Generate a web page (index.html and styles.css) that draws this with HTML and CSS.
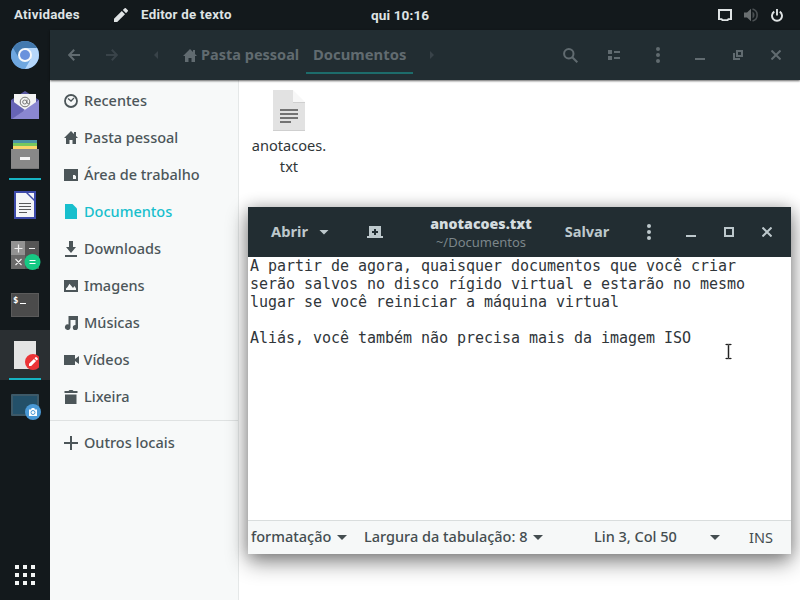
FILE: index.html
```html
<!DOCTYPE html>
<html lang="pt-BR">
<head>
<meta charset="utf-8">
<title>Editor de texto</title>
<link rel="stylesheet" href="styles.css">
</head>
<body>
<div class="desktop">
  <header class="topbar">
    <span class="activities">Atividades</span>
    <svg class="pencil" width="14" height="14" viewBox="0 0 14 14"><path fill="#dfe3e4" d="M0 14v-3.200L7.800 3l3.200 3.200L3.200 14zM8.800 2l1.600-1.600a1.200 1.200 0 0 1 1.700 0l1.500 1.500a1.200 1.200 0 0 1 0 1.700L12 5.200z"/></svg>
    <span class="appname">Editor de texto</span>
    <span class="clock">qui 10:16</span>
    <span class="tray">
      <svg width="14" height="12" viewBox="0 0 14 12"><path fill="#dfe3e4" fill-rule="evenodd" d="M0 0h14v11h-3l-1 1H4l-1-1H0zM2 2v7.200h2l1 1h4l1-1h2V2z"/></svg>
      <svg width="15" height="14" viewBox="0 0 15 14"><path fill="#6a6f71" d="M0 4.500h3L7 .8v12.400L3 9.500H0z"/><path fill="#4b5053" d="M8.500 3.500a4 4 0 0 1 0 7z"/><path d="M8.500 1a6.200 6.200 0 0 1 0 12" fill="none" stroke="#4b5053" stroke-width="1.600"/></svg>
      <svg width="12" height="13" viewBox="0 0 12 13"><path d="M3.300 2.600a5 5 0 1 0 5.400 0M6 0v6.500" fill="none" stroke="#dfe3e4" stroke-width="1.900"/></svg>
    </span>
  </header>

  <div class="workspace">
    <nav class="dock">
      <div class="app"><svg width="28" height="28" viewBox="0 0 28 28"><circle cx="14" cy="14" r="14" fill="#65a1dc"/><path fill="#4379ae" d="M1.900 7A14 14 0 0 1 26.100 7L14 7.500 8 17z"/><path fill="#6fa7df" d="M1.900 7a14 14 0 0 0 12.100 21l6-10.500-12 .5z"/><path fill="#b5d7fb" d="M14 7h12.100A14 14 0 0 1 14 28l6-10.500z"/><circle cx="14" cy="14" r="7" fill="#f5f8fb"/><circle cx="14" cy="14" r="5" fill="#6a92dd"/></svg></div>
      <div class="app mail"><svg width="28" height="28" viewBox="0 0 28 28"><path fill="#5957a0" d="M0 9 14 0l14 9v10H0z"/><path fill="#f3f3f3" d="M3 3h22v17H3z"/><circle cx="14" cy="11" r="4.800" fill="none" stroke="#777" stroke-width="1"/><circle cx="13.700" cy="11" r="2" fill="none" stroke="#777"/><path d="M16 8.500v3.500q1.500 1.500 2.500-.5" fill="none" stroke="#777"/><path fill="#6664b5" d="M0 9l14 10L0 29z"/><path fill="#8a87d1" d="M0 28.500 28 9v19.500z"/></svg></div>
      <div class="app running archive"><svg width="28" height="29" viewBox="0 0 28 29"><path fill="#4b92a3" d="M2 0h24v4H2z"/><path fill="#78c95d" d="M2 3h24v4H2z"/><path fill="#fbd76a" d="M2 6h24v4H2z"/><path fill="#888" d="M0 9h28v20H0z"/><path fill="#777" d="M0 28h28v1H0z"/><path fill="#f4f4f4" d="M9 17h10v3H9z"/></svg></div>
      <div class="app"><svg width="22" height="28" viewBox="0 0 22 28"><path fill="#3d4aaa" d="M0 0h22v28H0z"/><path fill="#f4f5f8" d="M2 2h10l8 8v16H2z"/><path fill="#f4f5f8" d="M14 2h6v6z"/><path d="M5 12.500h12M5 15.500h12M5 18.500h12M5 21.500h8" stroke="#58595c"/></svg></div>
      <div class="app calc"><svg width="30" height="29" viewBox="0 0 30 29"><path fill="#929292" d="M0 0h14v14H0z"/><path fill="#555" d="M14 0h14v14H14z"/><path fill="#696969" d="M0 14h14v14H0z"/><path fill="#555" d="M14 14h14v14H14z"/><path d="M3.500 7.500h8M7.500 3.500v8M18 7.500h6M4.500 18l6 6m0-6-6 6" stroke="#eee" stroke-width="1.200"/><circle cx="21.500" cy="21" r="8" fill="#16c984"/><path d="M18.500 19.500h6m-6 3h6" stroke="#fff" stroke-width="1.200"/></svg></div>
      <div class="app"><div class="terminal">$<i></i></div></div>
      <div class="app running current"><svg width="28" height="29" viewBox="0 0 28 29"><path fill="#e4e4e4" d="M3 0h22v28H3z"/><circle cx="22" cy="21" r="8" fill="#eb3336"/><path fill="#fff" d="M18 25v-2.200l4.900-4.900 2.200 2.200-4.900 4.900zM23.500 17.300l1-1q.5-.5 1 0l1.200 1.200q.5.500 0 1l-1 1z"/></svg></div>
      <div class="app camera"><svg width="30" height="26" viewBox="0 0 30 26"><rect width="28" height="22" rx="1" fill="#3d5968"/><path fill="#235069" d="M2 2h24v18H2z"/><circle cx="22" cy="18" r="8" fill="#4a99d6"/><path fill="#fff" d="M18 15.500h2l.8-1.500h2.400l.8 1.500h2V22h-8z"/><circle cx="22" cy="18.500" r="2" fill="none" stroke="#4a99d6"/></svg></div>
      <svg class="launcher" width="20" height="20" viewBox="0 0 20 20" fill="#f2f4f4"><path d="M0 0h4v4H0zM8 0h4v4H8zM16 0h4v4h-4zM0 8h4v4H0zM8 8h4v4H8zM16 8h4v4h-4zM0 16h4v4H0zM8 16h4v4H8zM16 16h4v4h-4z"/></svg>
    </nav>

    <main class="files">
      <div class="filesbar">
        <svg width="12" height="12" viewBox="0 0 12 12"><path class="line" d="M6.200.8 1.200 6l5 5.200M1 6h11"/></svg>
        <svg class="faded" width="12" height="12" viewBox="0 0 12 12"><path class="line" d="m5.800.8 5 5.200-5 5.200M11 6H0"/></svg>
        <svg class="faded" width="4" height="8" viewBox="0 0 4 8"><path fill="currentColor" d="M4 0v8L0 4z"/></svg>
        <div class="crumb home"><svg width="14" height="13" viewBox="0 0 14 13"><path fill="currentColor" d="M7 0 0 7h2v6h3.500V9h3v4H12V7h2l-2-2V1h-2v2z"/></svg><span>Pasta pessoal</span></div>
        <div class="crumb selected"><span>Documentos</span></div>
        <svg class="faded" width="4" height="8" viewBox="0 0 4 8"><path fill="currentColor" d="M0 0v8l4-4z"/></svg>
        <i></i>
        <svg width="15" height="15" viewBox="0 0 15 15"><circle class="line" cx="5.800" cy="5.800" r="4.700"/><path class="line" d="m9.300 9.300 5 5"/></svg>
        <svg width="12" height="10" viewBox="0 0 12 10"><path fill="currentColor" d="M0 0h4v4H0zM6 1h6v2H6zM0 6h4v4H0zM6 7h6v2H6z"/></svg>
        <svg width="4" height="16" viewBox="0 0 4 16"><g fill="currentColor"><circle cx="2" cy="2" r="2"/><circle cx="2" cy="8" r="2"/><circle cx="2" cy="14" r="2"/></g></svg>
        <i></i>
        <svg width="10" height="10" viewBox="0 0 10 10"><path fill="currentColor" d="M0 8h10v2H0z"/></svg>
        <svg width="10" height="10" viewBox="0 0 10 10"><path fill="currentColor" fill-rule="evenodd" d="M3 0h7v7H3zM5 2v3h3V2zM0 3h2v5h5v2H0z"/></svg>
        <svg width="10" height="10" viewBox="0 0 10 10"><path class="line" d="m.5.500 9 9m0-9-9 9"/></svg>
      </div>
      <div class="filesbody">
        <aside class="places">
          <div class="place"><svg width="14" height="14" viewBox="0 0 14 14"><circle cx="7" cy="7" r="6" fill="none" stroke="currentColor" stroke-width="1.800"/><path d="m4 4.500 3 2.500 3-3" fill="none" stroke="currentColor" stroke-width="1.300"/></svg><span>Recentes</span></div>
          <div class="place"><svg width="14" height="13" viewBox="0 0 14 13"><path fill="currentColor" d="M7 0 0 7h2v6h3.500V9h3v4H12V7h2l-2-2V1h-2v2z"/></svg><span>Pasta pessoal</span></div>
          <div class="place"><svg width="14" height="12" viewBox="0 0 14 12"><path fill="currentColor" fill-rule="evenodd" d="M0 0h14v12H0zM9 6v4h3V7.200L10.800 6z"/></svg><span>Área de trabalho</span></div>
          <div class="place active"><svg width="14" height="15" viewBox="0 0 14 15"><path fill="currentColor" d="M1 0h7.500L13 4.500V15H1z"/></svg><span>Documentos</span></div>
          <div class="place"><svg width="14" height="16" viewBox="0 0 14 16"><path fill="currentColor" d="M5 0h4v6h3l-5 6-5-6h3zM1 14h12v2H1z"/></svg><span>Downloads</span></div>
          <div class="place"><svg width="14" height="12" viewBox="0 0 14 12"><path fill="currentColor" fill-rule="evenodd" d="M0 0h14v12H0zM2 10h10V8.500L10.500 6 9 8 5.500 3.800 3.500 7 2 8.500z"/></svg><span>Imagens</span></div>
          <div class="place"><svg width="14" height="14" viewBox="0 0 14 14"><path fill="currentColor" d="M4.500 0H14v11.500A2.600 2.600 0 1 1 11.500 9V4H6.500v7.500A2.800 2.800 0 1 1 4.500 8.500z"/></svg><span>Músicas</span></div>
          <div class="place video"><svg width="15" height="10" viewBox="0 0 15 10"><path fill="currentColor" d="M0 0h11v4l4-3v8l-4-3v4H0z"/></svg><span>Vídeos</span></div>
          <div class="place"><svg width="14" height="14" viewBox="0 0 14 14"><path fill="currentColor" d="M.5 1h4l1-1h3l1 1h4v2H.5zM1 4.500h11.500V14H1z"/></svg><span>Lixeira</span></div>
          <div class="place other"><svg width="14" height="14" viewBox="0 0 14 14"><path fill="currentColor" d="M6 0h2v6h6v2H8v6H6V8H0V6h6z"/></svg><span>Outros locais</span></div>
        </aside>
        <section class="listing">
          <div class="file">
            <svg width="32" height="41" viewBox="0 0 32 41"><path fill="#e2e2e2" d="M0 0h20v12h12v29H0z"/><path fill="#f7f7f7" d="m20 0 12 12H20z"/><path fill="#cfcfcf" d="M0 40h32v1H0zM20 12h12v1H20z"/><path fill="#737373" d="M7 19h18v2H7zM7 23h18v2H7zM7 27h18v2H7zM7 31h11v2H7z"/></svg>
            <span>anotacoes.<br>txt</span>
          </div>
        </section>
      </div>
    </main>
  </div>

  <section class="editor">
    <div class="editorbar">
      <div class="open"><span>Abrir</span><b class="caret"></b></div>
      <svg width="16" height="12" viewBox="0 0 16 12"><path fill="currentColor" fill-rule="evenodd" d="M2 0h12v10h2v2H0v-2h2zM7 3v2H5v2h2v2h2V7h2V5H9V3z"/></svg>
      <div class="title"><strong>anotacoes.txt</strong><small>~/Documentos</small></div>
      <span class="save">Salvar</span>
      <i></i>
      <svg width="4" height="16" viewBox="0 0 4 16"><g fill="currentColor"><circle cx="2" cy="2" r="2"/><circle cx="2" cy="8" r="2"/><circle cx="2" cy="14" r="2"/></g></svg>
      <i></i>
      <svg width="10" height="10" viewBox="0 0 10 10"><path fill="currentColor" d="M0 8h10v2H0z"/></svg>
      <svg width="10" height="10" viewBox="0 0 10 10"><path fill="currentColor" fill-rule="evenodd" d="M0 0h10v10H0zM2 2v6h6V2z"/></svg>
      <svg width="10" height="10" viewBox="0 0 10 10"><path class="line" d="m.5.500 9 9m0-9-9 9"/></svg>
    </div>
    <pre class="text">A partir de agora, quaisquer documentos que você criar
serão salvos no disco rígido virtual e estarão no mesmo
lugar se você reiniciar a máquina virtual

Aliás, você também não precisa mais da imagem ISO</pre>
    <footer class="status">
      <span class="format">formatação</span><b class="caret"></b>
      <span class="tabs">Largura da tabulação: 8</span><b class="caret"></b>
      <span class="position">Lin 3, Col 50</span><b class="caret"></b>
      <span class="mode">INS</span>
    </footer>
  </section>
  <svg class="pointer" width="9" height="18" viewBox="0 0 9 18"><path d="M2 1.500h5M2 15.500h5M4.500 1.500v14" stroke="#ddd" stroke-width="3"/><path d="M1.500 1.500h2l1 .5 1-.5h2M1.500 15.500h2l1-.5 1 .5h2M4.500 2v13" fill="none" stroke="#222" stroke-width="1.200"/></svg>
</div>
</body>
</html>
```
FILE: styles.css
```css
* { box-sizing: border-box; }
body { margin: 0; }
svg { display: block; flex: none; }
span, strong, small { white-space: nowrap; }

.desktop {
  position: relative;
  display: flex;
  flex-direction: column;
  width: 800px;
  height: 600px;
  overflow: hidden;
  background: #13191c;
  font: 500 15px/20px "Noto Sans", sans-serif;
}

.topbar {
  display: grid;
  grid-template-columns: 100px 27px 230px 86px 1fr;
  align-items: center;
  height: 30px;
  padding-left: 14px;
  color: #dfe3e4;
  font: 700 13.300px/30px Roboto, sans-serif;
  letter-spacing: .27px;
}
.clock { font-size: 13.600px; letter-spacing: .1px; }
.tray { display: flex; align-items: center; justify-content: flex-end; gap: 12px; padding-right: 17px; }

.workspace { display: flex; height: 570px; }
.dock { display: flex; flex-direction: column; width: 50px; }
.app { display: flex; align-items: center; justify-content: center; height: 50px; }
.running { background: linear-gradient(#16b3c2, #16b3c2) 9px 48px / 32px 2px no-repeat; }
.current { background-color: #2a2f32; }
.mail, .archive { padding-bottom: 1px; }
.calc, .camera { padding-left: 2px; }
.camera { padding-top: 4px; }
.terminal {
  display: flex;
  flex: none;
  width: 28px;
  height: 24px;
  padding: 0 1px;
  background: #4b4b4b;
  border: 1px solid #5b5b5b;
  color: #fff;
  font: 700 9px/12px "DejaVu Sans Mono", monospace;
}
.terminal i { width: 6px; height: 1px; margin: 9px 0 0 2px; background: #fff; }
.launcher { margin: auto auto 15px 15px; }

.files { display: flex; flex-direction: column; width: 750px; background: #fff; }
.filesbar {
  display: grid;
  grid-template-columns: 38px 38px 50px 125px 107px 38px 97px 44px 44px 44px 1px 38px 38px 38px;
  align-items: center;
  justify-items: center;
  height: 50px;
  padding: 0 5px;
  background: #222d32;
  color: #616b70;
  box-shadow: 0 1px 2px #0009;
  z-index: 1;
}
.line { fill: none; stroke: currentColor; stroke-width: 2; }
.faded { color: #394349; }
.crumb { display: flex; align-items: center; height: 50px; width: 100%; font-weight: 700; font-size: 14.500px; }
.crumb span { padding-bottom: 2px; }
.home { padding-left: 2px; gap: 4px; }
.selected { padding-left: 7px; font-size: 14.800px; background: linear-gradient(#1d6c6b, #1d6c6b) 0 42px / 107px 2px no-repeat; }
.filesbody { display: flex; height: 520px; }
.places {
  width: 189px;
  padding-top: 2px;
  background: #f7f9f9;
  border-right: 1px solid #e5e8e8;
  color: #4c5659;
}
.place { display: flex; align-items: center; gap: 6px; height: 37px; padding-left: 14px; font-size: 14.500px; }
.place span { padding-bottom: 2px; }
.video { gap: 5px; }
.video span { margin-left: -.5px; }
.active { color: #18bfcd; }
.other { height: 45px; margin-top: 5px; border-top: 1px solid #dfe2e2; }
.other span { padding-bottom: 3px; }
.listing { padding: 10px 0 0 3px; }
.file { display: flex; flex-direction: column; align-items: center; gap: 4px; width: 94px; color: #303638; font-weight: 400; font-size: 14.600px; line-height: 21px; text-align: center; }

.editor {
  position: absolute;
  z-index: 2;
  left: 248px;
  top: 207px;
  display: flex;
  flex-direction: column;
  width: 543px;
  height: 347px;
  background: #fff;
  box-shadow: 0 8px 20px #0007, 0 0 14px #0003;
}
.editorbar {
  display: grid;
  grid-template-columns: 102px 50px 162px 50px 18px 38px 4px 38px 38px 38px;
  align-items: center;
  justify-items: center;
  height: 50px;
  background: #222d32;
  color: #bdc8cc;
  font-weight: 700;
}
.open { display: flex; align-items: center; gap: 11px; justify-self: start; padding-left: 23px; font-size: 14.700px; }
.open span { padding-bottom: 2px; }
.save { padding-bottom: 3px; font-size: 14.600px; }
.title { display: flex; flex-direction: column; align-items: center; }
.title strong { font-size: 14.200px; line-height: 20px; color: #d4dcdf; }
.title small { font-size: 13px; line-height: 17px; font-weight: 400; color: #7c868a; }
.caret { flex: none; width: 10px; height: 5px; background: currentColor; clip-path: polygon(0 0, 100% 0, 50% 100%); }
.text {
  flex: 1;
  margin: 0;
  padding: 0 2px;
  color: #30363a;
  font: 400 15px/18px "DejaVu Sans Mono", monospace;
  letter-spacing: -.03px;
}
.status {
  display: grid;
  grid-template-columns: 86px 27px 169px 61px 116px 39px 1fr;
  align-items: center;
  height: 34px;
  padding-left: 3px;
  background: #f6f8f8;
  border-top: 1px solid #d9dddd;
  color: #444d50;
  font-size: 14.500px;
}
.status span { padding-bottom: 3px; }
.status .mode { padding-bottom: 1px; font-weight: 400; }
.pointer { position: absolute; z-index: 3; left: 724px; top: 343px; }
```
